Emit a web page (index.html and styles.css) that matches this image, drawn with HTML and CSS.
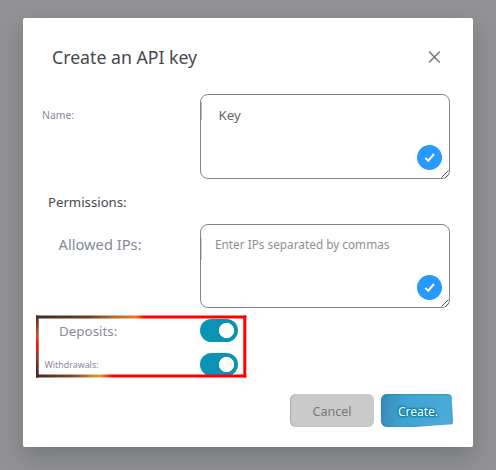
FILE: index.html
```html
<!DOCTYPE html>
<html lang="en">
<head>
<meta charset="utf-8">
<title>Create an API key</title>
<link rel="stylesheet" href="styles.css">
</head>
<body>
<main class="modal">
  <header class="header">
    <h1 class="title">Create an API key</h1>
    <svg class="close" viewBox="0 0 12 12"><path d="M.6.6l10.8 10.8M11.4.6L.6 11.4" fill="none" stroke="#747477" stroke-width="1.4"/></svg>
  </header>
  <div class="row row-name">
    <span class="label label-name">Name:</span>
    <div class="field field-name">
      <span class="value">Key</span>
      <svg class="check" viewBox="0 0 25 25"><circle cx="12.5" cy="12.5" r="12.5" fill="#2799ff"/><path d="M8.3 12.9l3 2.900 5.600-6.800" fill="none" stroke="#fff" stroke-width="2"/></svg>
      <svg class="grip" viewBox="0 0 8 8"><path d="M.5 7.500l7-7M4.500 7.500l3-3" fill="none" stroke="#555" stroke-width="1"/></svg>
    </div>
  </div>
  <h2 class="section">Permissions:</h2>
  <div class="row row-ips">
    <span class="label label-ips">Allowed IPs:</span>
    <div class="field field-ips">
      <span class="placeholder">Enter IPs separated by commas</span>
      <svg class="check" viewBox="0 0 25 25"><circle cx="12.5" cy="12.5" r="12.5" fill="#2799ff"/><path d="M8.3 12.9l3 2.900 5.600-6.800" fill="none" stroke="#fff" stroke-width="2"/></svg>
      <svg class="grip" viewBox="0 0 8 8"><path d="M.5 7.500l7-7M4.500 7.500l3-3" fill="none" stroke="#555" stroke-width="1"/></svg>
    </div>
  </div>
  <div class="toggles">
    <div class="row row-deposits"><span class="label label-deposits">Deposits:</span><span class="switch"></span></div>
    <div class="row row-withdrawals"><span class="label label-withdrawals">Withdrawals:</span><span class="switch"></span></div>
    <svg class="highlight" viewBox="0 0 212 64">
      <defs>
        <linearGradient id="top" gradientUnits="userSpaceOnUse" x1="0" y1="0" x2="212" y2="0"><stop offset="0" stop-color="#402b20"/><stop offset=".24" stop-color="#6b3c20"/><stop offset=".36" stop-color="#b06525"/><stop offset=".47" stop-color="#f07a20"/><stop offset=".51" stop-color="#f00"/></linearGradient>
        <linearGradient id="bottom" gradientUnits="userSpaceOnUse" x1="0" y1="0" x2="212" y2="0"><stop offset="0" stop-color="#3d2c22"/><stop offset=".18" stop-color="#80502c"/><stop offset=".3" stop-color="#e5a032"/><stop offset=".36" stop-color="#f00"/></linearGradient>
        <linearGradient id="left" gradientUnits="userSpaceOnUse" x1="0" y1="0" x2="0" y2="64"><stop offset="0" stop-color="#402b20"/><stop offset=".3" stop-color="#b95227"/><stop offset=".5" stop-color="#f01010"/><stop offset=".65" stop-color="#8d3820"/><stop offset="1" stop-color="#302722"/></linearGradient>
      </defs>
      <path d="M0 .5h210.300v3H0z" fill="url(#top)"/>
      <path d="M0 59.500h210.300v3H0z" fill="url(#bottom)"/>
      <path d="M0 .5h2.700v62H0z" fill="url(#left)"/>
      <path d="M207.300 .5h3v62h-3z" fill="#f00"/>
    </svg>
  </div>
  <footer class="actions">
    <button class="button cancel">Cancel</button>
    <button class="button create">Create.</button>
  </footer>
</main>
</body>
</html>
```
FILE: styles.css
```css
* { box-sizing: border-box; }
body { margin: 0; height: 470px; overflow: hidden; padding: 18px 23px 23px; background: #929294; font-family: "Noto Sans", sans-serif; color: #47474f; }
.modal { width: 450px; height: 429px; background: #fff; border-radius: 2px; box-shadow: 0 10px 25px rgba(65, 72, 75, .36); }
.header { display: flex; justify-content: space-between; height: 76px; padding: 27px 33px 0 29px; }
.title { margin: 0; font-size: 17.7px; line-height: 24px; font-weight: 400; white-space: nowrap; }
.close { width: 12px; height: 12px; margin-top: 5.5px; transform: translateX(.4px); }
.row { display: grid; grid-template-columns: 177px 250px; align-items: start; }
.label { color: #858a99; white-space: nowrap; }
.label-name { font-size: 10.4px; line-height: 16px; margin: 13px 0 0 19px; }
.field { position: relative; border: 1px solid #858587; border-radius: 8px; }
.field::before { content: ""; position: absolute; left: 0; top: 7px; width: 1px; height: 18px; background: #b5b5b7; }
.field-ips::before { top: 13px; height: 22px; background: #cacacc; }
.field-name { height: 85px; padding: 10px 17.5px; }
.field-ips { height: 84px; padding: 9px 14px; }
.value, .placeholder { display: block; white-space: nowrap; line-height: 20px; }
.value { font-size: 13.3px; color: #66666c; }
.placeholder { font-size: 11.8px; color: #8e8e91; }
.check { position: absolute; right: 7px; top: 50px; width: 25px; height: 25px; }
.grip { position: absolute; right: 0; bottom: 0; width: 8px; height: 8px; }
.section { margin: 13px 0 12px 25px; height: 20px; font-size: 13.2px; line-height: 20px; font-weight: 400; }
.label-ips { font-size: 14.7px; line-height: 20px; margin: 10px 0 0 35.5px; }
.toggles { position: relative; padding-top: 11px; }
.row-deposits { height: 34px; }
.row-withdrawals { height: 23px; }
.label-deposits { font-size: 13.4px; line-height: 20px; margin: 2px 0 0 36px; }
.label-withdrawals { font-size: 8.9px; line-height: 14px; margin: 5px 0 0 21.5px; }
.switch { width: 38px; height: 23px; border-radius: 12px; background: radial-gradient(circle at 26.5px 11.5px, #fff 7.3px, #0b93b6 7.9px); }
.highlight { position: absolute; left: 13px; top: 7px; width: 212px; height: 64px; }
.actions { display: flex; gap: 7px; padding: 18px 0 0 267px; }
.button { height: 33px; padding: 2px 0 0; border: 0; border-radius: 6px; font-family: inherit; }
.cancel { width: 84px; background: #cacacb; color: #77777d; font-size: 12.5px; box-shadow: inset 1px 0 1px #aaa; }
.create { width: 72px; padding-left: 2px; background: linear-gradient(100deg, #3789b4, #40a4d4 35%, #4dabd8); color: #fff; font-size: 12px; box-shadow: inset 0 0 2px #087ca5; text-shadow: 0 0 2px #087d9e, 1px 1px 2px #087d9e, -1px -1px 2px #087d9e, 1px -1px 1px #178fb3, -1px 1px 1px #178fb3; clip-path: polygon(0 0, 98% 0, 100% 92%, 45% 100%, 0 100%); }
```
